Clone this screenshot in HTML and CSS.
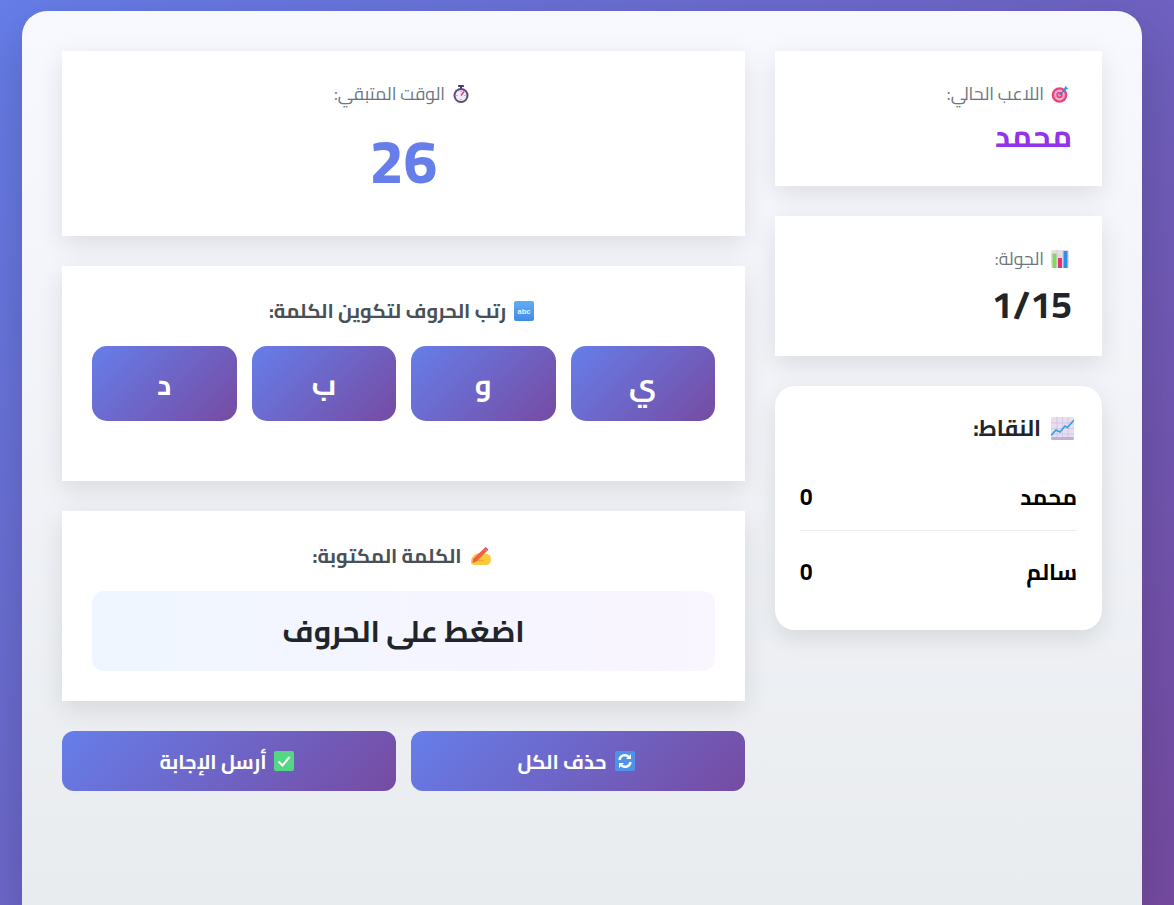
FILE: index.html
```html
<!DOCTYPE html>
<html lang="ar" dir="rtl">
<head>
<meta charset="utf-8">
<title>لعبة الكلمات</title>
<link rel="stylesheet" href="styles.css">
</head>
<body>
<main class="shell">
  <aside class="side">
    <section class="card info">
      <div class="label">
        <svg class="ico ico-s" viewBox="0 0 18 18" aria-hidden="true"><circle cx="8.500" cy="10" r="7.800" fill="#e8447f"/><circle cx="8.500" cy="10" r="5.400" fill="#eeb4cf"/><circle cx="8.500" cy="10" r="3.200" fill="#e8447f"/><circle cx="8.500" cy="10" r="1.400" fill="#eeb4cf"/><path d="M8.500 10 15 3.500" stroke="#3d7fb8" stroke-width="1.300"/><path d="M13 3.500 15 .5l.6 2 2 .6-3 2.200-2 .3z" fill="#2f9be8"/></svg>
        <span>اللاعب الحالي:</span>
      </div>
      <div class="player">محمد</div>
    </section>
    <section class="card info round">
      <div class="label">
        <svg class="ico ico-s" viewBox="0 0 18 18" aria-hidden="true"><rect width="18" height="18" rx="1" fill="#e4dfe9"/><path d="M0 6h18M0 12h18M6 0v18M12 0v18" stroke="#cfc8d6" stroke-width=".7"/><rect x="1.500" y="3.500" width="4" height="14.500" fill="#86d860"/><rect x="7" y="8" width="4" height="10" fill="#ea2f78"/><rect x="12.500" y="1" width="4" height="17" fill="#2f8fe8"/></svg>
        <span>الجولة:</span>
      </div>
      <div class="round-value">1/15</div>
    </section>
    <section class="scores">
      <h3 class="scores-title">
        <svg class="ico ico-l" viewBox="0 0 23 23" aria-hidden="true"><rect width="23" height="23" rx="2" fill="#e6dff0"/><path d="M0 6h23M0 11.500h23M0 17h23M6 0v23M11.500 0v23M17 0v23" stroke="#cdbfdd" stroke-width=".7"/><rect y="20" width="23" height="3" rx="1.500" fill="#c4aed8"/><path d="M0 18.500 5 13l4 2 5-6 2.500 1.500L23 3" fill="none" stroke="#3a9ee4" stroke-width="1.700"/></svg>
        <span>النقاط:</span>
      </h3>
      <div class="score-row"><span>محمد</span><span>0</span></div>
      <div class="score-row"><span>سالم</span><span>0</span></div>
    </section>
  </aside>
  <div class="main">
    <section class="card timer">
      <div class="label">
        <svg class="ico ico-s" viewBox="0 0 18 18" aria-hidden="true"><rect x="6" y="0" width="6" height="2" rx=".7" fill="#4b3a6e"/><rect x="8" y="2" width="2" height="2" fill="#4b3a6e"/><circle cx="9" cy="10.500" r="7.500" fill="#5a4a7c"/><circle cx="9" cy="10.500" r="5.500" fill="#efeaf3"/><path d="M9 10.500 12 6.500" stroke="#e0356f" stroke-width="1.300"/><path d="M9 6v1M9 14v1M4.500 10.500h1M12.500 10.500h1" stroke="#7a6c96" stroke-width=".8"/></svg>
        <span>الوقت المتبقي:</span>
      </div>
      <div class="time">26</div>
    </section>
    <section class="card letters">
      <h3 class="heading">
        <svg class="ico ico-m" viewBox="0 0 20 20" aria-hidden="true"><defs><linearGradient id="blue" x1="0" y1="0" x2="0" y2="1"><stop offset="0" stop-color="#62aef5"/><stop offset="1" stop-color="#3f8ae8"/></linearGradient></defs><rect width="20" height="20" rx="2" fill="url(#blue)"/><text class="ico-text" x="10" y="13" text-anchor="middle" direction="ltr">abc</text></svg>
        <span>رتب الحروف لتكوين الكلمة:</span>
      </h3>
      <div class="letter-grid">
        <button class="letter">ي</button>
        <button class="letter">و</button>
        <button class="letter">ب</button>
        <button class="letter">د</button>
      </div>
    </section>
    <section class="card word">
      <h3 class="heading">
        <svg class="ico ico-m2" viewBox="0 0 21 21" aria-hidden="true"><path d="M1 16c0-5 4-9 9-9l7 1c3 .5 4 2.500 4 5.500 0 3.500-2 5.500-5 5.500H7c-4 0-6-.5-6-3z" fill="#fbc840"/><path d="M6 14c3 1 6 1 8 0" fill="none" stroke="#f0a020" stroke-width="1"/><path d="M3 13 14 2.500l3 2.500L6.500 15.500 2.500 17z" fill="#f0623a"/><path d="M14 2.500 15.500 1l3 2.500L17 5z" fill="#e8447f"/></svg>
        <span>الكلمة المكتوبة:</span>
      </h3>
      <div class="word-box">اضغط على الحروف</div>
    </section>
    <div class="actions">
      <button class="action">
        <svg class="ico ico-m" viewBox="0 0 20 20" aria-hidden="true"><rect width="20" height="20" rx="2" fill="#4e93ea"/><path d="M4.500 9a5.500 5.500 0 0 1 9.500-3M15.500 11a5.500 5.500 0 0 1-9.500 3" fill="none" stroke="#fff" stroke-width="2.400"/><path d="M16 3v5h-5zM4 17v-5h5z" fill="#fff"/></svg>
        <span>حذف الكل</span>
      </button>
      <button class="action">
        <svg class="ico ico-m" viewBox="0 0 20 20" aria-hidden="true"><rect width="20" height="20" rx="2" fill="#55d685"/><path d="M4.500 10.500 8.500 14.500 15.500 6" fill="none" stroke="#fff" stroke-width="2"/></svg>
        <span>أرسل الإجابة</span>
      </button>
    </div>
  </div>
</main>
</body>
</html>
```
FILE: styles.css
```css
* { box-sizing: border-box; margin: 0; padding: 0; }
html, body { height: 905px; overflow: hidden; }
body {
  font-family: Cairo, "Noto Sans", sans-serif;
  background: linear-gradient(135deg, #667eea 0%, #764ba2 100%);
  padding: 11px 32px 0 22px;
}
.shell {
  height: 894px;
  display: grid;
  grid-template-columns: 327px 683px;
  gap: 30px;
  align-content: start;
  padding: 40px;
  border-radius: 25px 25px 0 0;
  background: linear-gradient(180deg, #f8f9ff 0%, #e9ecef 100%);
  box-shadow: 0 20px 60px rgba(0,0,0,.2);
}
.side, .main { display: flex; flex-direction: column; gap: 30px; }
.card { background: #fff; box-shadow: 0 8px 25px rgba(0,0,0,.1); padding: 31px 30px 30px; }
.word, .letters { padding-top: 30px; }
.info { height: 135px; }
.round { height: 140px; }
.label { display: flex; align-items: center; gap: 7px; font-size: 17.6px; line-height: 24px; color: #6c757d; }
.ico { flex: none; display: block; }
.ico-s { width: 18px; height: 18px; margin-right: 3px; }
.ico-m { width: 20px; height: 20px; }
.ico-m2 { width: 21px; height: 21px; }
.ico-l { width: 23px; height: 23px; margin-right: 3px; }
.ico-text { font: 700 7.500px "Liberation Sans", sans-serif; fill: #e8f2ff; }
.player { font-size: 30.4px; font-weight: 700; color: #9333ea; margin-top: 10px; line-height: 40px; }
.round-value { font-size: 37.6px; font-weight: 700; color: #212529; margin-top: 11px; line-height: 44px; }
.scores { height: 244px; background: #fff; border-radius: 20px; padding: 24px 25px 25px; box-shadow: 0 8px 25px rgba(0,0,0,.1); }
.scores-title { display: flex; align-items: center; gap: 10px; font-size: 22.4px; line-height: 36px; font-weight: 700; color: #212529; margin-bottom: 16px; }
.score-row { display: flex; justify-content: space-between; align-items: center; height: 68px; padding: 16px 0 14px; font-size: 22.4px; font-weight: 700; color: #000; }
.score-row + .score-row { border-top: 1px solid #e9ecef; height: 84px; padding: 14px 0 16px; }
.timer { height: 185px; text-align: center; }
.timer .label { justify-content: center; }
.time { font-size: 60.8px; line-height: 72px; font-weight: 800; color: #667eea; margin-top: 19px; }
.letters { height: 215px; }
.word { height: 190px; }
.heading { display: flex; align-items: center; justify-content: center; gap: 8px; padding-right: 4px; font-size: 20px; line-height: 30px; font-weight: 700; color: #495057; margin-bottom: 20px; }
.letter-grid { display: grid; grid-template-columns: repeat(4, 1fr); gap: 15px; }
.letter {
  height: 75px; border: 0; border-radius: 15px; color: #fff; font: 700 28.8px Cairo, "Noto Sans", sans-serif;
  background: linear-gradient(135deg, #667eea 0%, #764ba2 100%);
}
.word-box {
  height: 80px; border-radius: 12px; display: flex; align-items: center; justify-content: center;
  font-size: 30px; font-weight: 700; color: #212529;
  background: linear-gradient(90deg, #eff6ff 0%, #faf5ff 100%);
}
.actions { display: grid; grid-template-columns: 1fr 1fr; gap: 15px; }
.action {
  display: flex; align-items: center; justify-content: center; gap: 8px; padding-right: 4px;
  height: 60px; border: 0; border-radius: 12px; color: #fff; font: 700 20px Cairo, "Noto Sans", sans-serif;
  background: linear-gradient(135deg, #667eea 0%, #764ba2 100%);
}
```
